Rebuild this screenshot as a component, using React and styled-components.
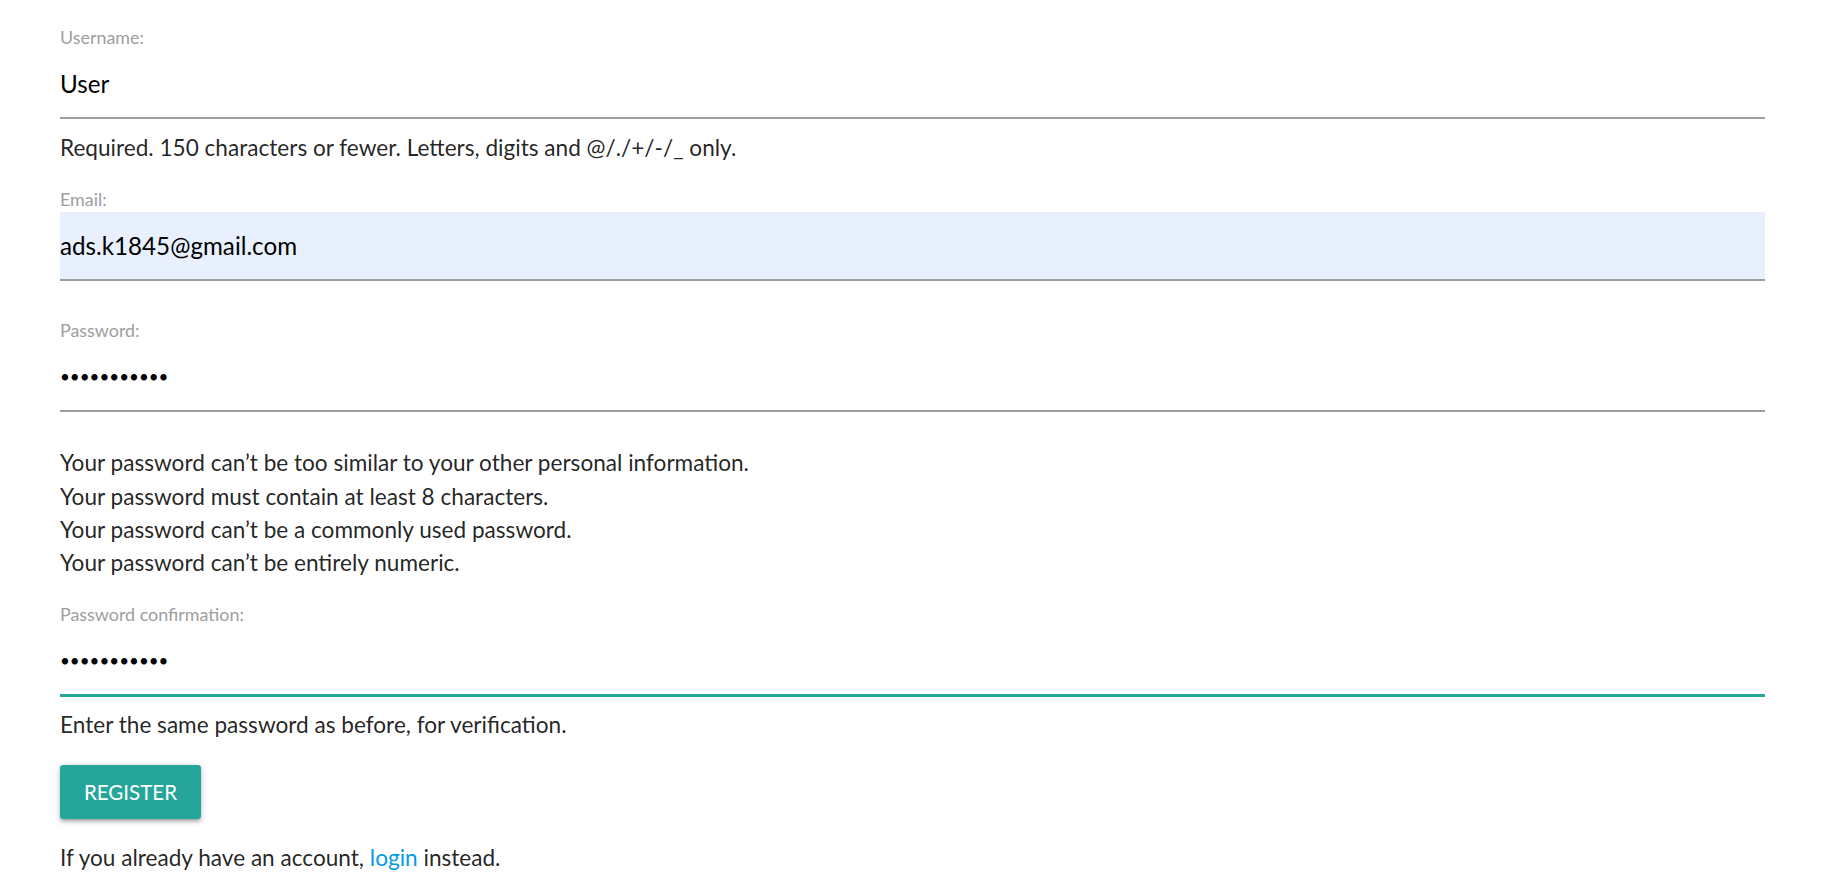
import React, { useEffect, useRef } from "react";
import styled, { createGlobalStyle } from "styled-components";

const GlobalStyle = createGlobalStyle`
  html, body {
    margin: 0;
    padding: 0;
    background: #ffffff;
  }
  body {
    font-family: Lato, "Open Sans", sans-serif;
    color: rgba(0, 0, 0, 0.87);
  }
  * { box-sizing: border-box; }
`;

const Page = styled.main`
  padding: 24px 61px 0 60px;
`;

const Form = styled.form`
  display: flex;
  flex-direction: column;
`;

const Field = styled.div`
  display: flex;
  flex-direction: column;
  margin-top: ${(p) => p.$gap || 0}px;
`;

const Label = styled.label`
  display: block;
  font-size: 17.9px;
  line-height: 26px;
  color: #9e9e9e;
`;

const Input = styled.input`
  display: block;
  width: 100%;
  height: 69px;
  margin: 0;
  padding: 0;
  border: none;
  border-bottom: 2px solid ${(p) => (p.$focused ? "#26a69a" : "#9e9e9e")};
  box-shadow: ${(p) => (p.$focused ? "0 1px 0 0 #26a69a" : "none")};
  border-radius: 0;
  outline: none;
  background: ${(p) => (p.$autofilled ? "#e8f0fe" : "transparent")};
  font-family: Lato, "Open Sans", sans-serif;
  font-size: ${(p) => (p.type === "password" ? "17px" : "24.2px")};
  color: #000;
  caret-color: #000;
`;

const HelpText = styled.p`
  margin: 12px 0 0;
  font-size: 22.6px;
  line-height: 33.3px;
  color: rgba(0, 0, 0, 0.87);
`;

const HelpList = styled.ul`
  list-style: none;
  margin: 34px 0 0;
  padding: 0;
`;

const HelpItem = styled.li`
  font-size: 22.6px;
  line-height: 33.3px;
  color: rgba(0, 0, 0, 0.87);
`;

const Actions = styled.div`
  display: flex;
  margin-top: 23px;
`;

const Button = styled.button`
  height: 54px;
  padding: 0 24px;
  border: none;
  border-radius: 3px;
  background: #26a69a;
  color: #ffffff;
  font-family: Lato, "Open Sans", sans-serif;
  font-size: 20.5px;
  line-height: 54px;
  text-transform: uppercase;
  cursor: pointer;
  box-shadow: 0 3px 3px 0 rgba(0, 0, 0, 0.14), 0 4px 1.5px -3px rgba(0, 0, 0, 0.12),
    0 1.5px 7px 0 rgba(0, 0, 0, 0.2);
`;

const Footer = styled.p`
  margin: 22px 0 0;
  font-size: 22.6px;
  line-height: 33.3px;
  color: rgba(0, 0, 0, 0.87);
`;

const Link = styled.a`
  color: #039be5;
  text-decoration: none;
`;

const passwordRules = [
  "Your password can\u2019t be too similar to your other personal information.",
  "Your password must contain at least 8 characters.",
  "Your password can\u2019t be a commonly used password.",
  "Your password can\u2019t be entirely numeric.",
];

export default function App() {
  const confirmRef = useRef(null);

  useEffect(() => {
    const el = confirmRef.current;
    if (el) {
      el.focus();
      const n = el.value.length;
      el.setSelectionRange(n, n);
    }
  }, []);

  return (
    <>
      <GlobalStyle />
      <Page>
        <Form onSubmit={(e) => e.preventDefault()}>
          <Field>
            <Label htmlFor="id_username">Username:</Label>
            <Input id="id_username" type="text" defaultValue="User" />
            <HelpText>Required. 150 characters or fewer. Letters, digits and @/./+/-/_ only.</HelpText>
          </Field>

          <Field $gap={22}>
            <Label htmlFor="id_email">Email:</Label>
            <Input id="id_email" type="email" defaultValue="ads.k1845@gmail.com" $autofilled />
          </Field>

          <Field $gap={36}>
            <Label htmlFor="id_password1">Password:</Label>
            <Input id="id_password1" type="password" defaultValue="abcdefghijk" />
            <HelpList>
              {passwordRules.map((r) => (
                <HelpItem key={r}>{r}</HelpItem>
              ))}
            </HelpList>
          </Field>

          <Field $gap={22}>
            <Label htmlFor="id_password2">Password confirmation:</Label>
            <Input
              id="id_password2"
              type="password"
              defaultValue="abcdefghijk"
              ref={confirmRef}
              $focused
            />
            <HelpText>Enter the same password as before, for verification.</HelpText>
          </Field>

          <Actions>
            <Button type="submit">Register</Button>
          </Actions>

          <Footer>
            If you already have an account, <Link href="#login">login</Link> instead.
          </Footer>
        </Form>
      </Page>
    </>
  );
}
